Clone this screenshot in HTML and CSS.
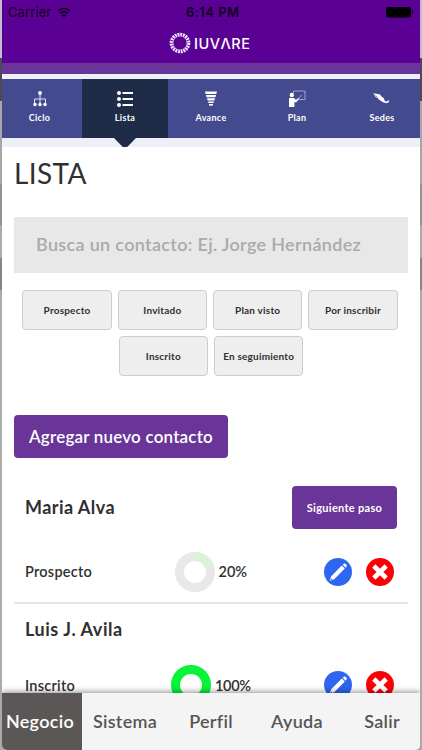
FILE: index.html
```
<!DOCTYPE html>
<html lang="es">
<head>
<meta charset="utf-8">
<title>IUVARE - Lista</title>
<link rel="stylesheet" href="styles.css">
</head>
<body>
<svg class="defs" width="0" height="0">
  <symbol id="edit" viewBox="0 0 28 28">
    <circle cx="14" cy="14" r="14" fill="#2f66f0"/>
    <path d="M5.500 23l1.700-4.800L17.800 7.600l3 3L10.200 21.300zM18.700 6.700l1.200-1c1.400-.8 3.600 1.400 2.700 2.800l-.9 1.200z" fill="#fff"/>
    <path d="M6.900 20.200l1.500 1.500-1.700.6z" fill="#2f66f0"/>
  </symbol>
  <symbol id="remove" viewBox="0 0 28 28">
    <circle cx="14" cy="14" r="14" fill="#fb0007"/>
    <path d="M7.800 8l12.400 12M20.200 8L7.800 20" stroke="#fff" stroke-width="4.600" fill="none"/>
  </symbol>
</svg>
<div class="phone">
  <header class="header">
    <div class="status">
      <span class="carrier">Carrier</span>
      <svg class="wifi" width="14" height="11" viewBox="0 0 14 11"><path d="M1 4c3.500-3.600 8.500-3.600 12 0M3.200 6.400c2.300-2.200 5.300-2.200 7.600 0" fill="none" stroke="#100020" stroke-width="1.700"/><path d="M4.900 8.100c1.300-1 2.900-1 4.200 0L7 10.500z" fill="#100020"/></svg>
      <span class="time">6:14 PM</span>
      <svg class="battery" width="28" height="11" viewBox="0 0 28 11"><rect width="25" height="10.500" rx="2"/><path d="M26 3q2 2.200 0 4.500z"/></svg>
    </div>
    <div class="brand">
      <svg width="22" height="22" viewBox="0 0 22 22" fill="none"><circle cx="11" cy="11" r="8.600" stroke="#f4e9ff" stroke-width="3.500" stroke-dasharray="1.850 .852"/><circle cx="11" cy="11" r="7" stroke="#c7a4e6" stroke-width=".7"/></svg>
      <span class="wordmark">IUVΛRE</span>
    </div>
  </header>
  <div class="stripe"></div>
  <nav class="nav">
    <a class="nav-item first">
      <svg width="18" height="18" viewBox="0 0 18 18"><path d="M9 3v10M3.500 13V9h11v4" fill="none" stroke="#dfe0f5"/><g fill="#fff"><circle cx="9" cy="3" r="1.900"/><circle cx="4" cy="14.500" r="1.700"/><circle cx="9" cy="14.500" r="1.700"/><circle cx="14" cy="14.500" r="1.700"/></g></svg>
      <span>Ciclo</span>
    </a>
    <a class="nav-item active">
      <svg width="18" height="18" viewBox="0 0 18 18"><g fill="#fff"><circle cx="3" cy="3" r="2"/><circle cx="3" cy="9" r="2"/><circle cx="3" cy="15" r="2"/><path d="M6.500 2h10.500v2H6.500zM6.500 8h10.500v2H6.500zM6.500 14h10.500v2H6.500z"/></g></svg>
      <span>Lista</span>
    </a>
    <a class="nav-item">
      <svg width="18" height="18" viewBox="0 0 18 18"><path d="M3 1.500h12l-.7 2.500H3.700zM4 5h10l-.6 2.200H4.600zM5 8.200h8l-.6 2.200H5.600zM6 11.400h6l-.5 1.700h-5zM6.900 14h4.200l-.6 1.800h-3z" fill="#fff"/></svg>
      <span>Avance</span>
    </a>
    <a class="nav-item">
      <svg width="18" height="18" viewBox="0 0 18 18"><path d="M5.500 3V1h11.500v8.500h-6M9.500 10l4-5" fill="none" stroke="#b6b9df" stroke-width=".8"/><circle cx="3.800" cy="5" r="2.200" fill="#fff"/><path d="M1 8h5l2 2 2-2 1 1-2.600 3.300H6.400V17H1z" fill="#fff"/></svg>
      <span>Plan</span>
    </a>
    <a class="nav-item last">
      <svg width="18" height="18" viewBox="0 0 18 18"><path d="M1 3.200l6 1.200 2 2.600 1.800 1 .6 2.300 1.700 1.400 1.700-1 1.700-.5-1.100 2.300-2 .7-2.900-.8L5.700 9.500 4 6.600z" fill="#fff"/><path d="M1 3.500l2.600 4.300" stroke="#fff" stroke-width="1"/></svg>
      <span>Sedes</span>
    </a>
  </nav>
  <div class="nav-shade"></div>
  <main class="content">
    <h1>LISTA</h1>
    <div class="search"><span>Busca un contacto: Ej. Jorge Hernández</span></div>
    <div class="filters">
      <button>Prospecto</button><button>Invitado</button><button>Plan visto</button><button>Por inscribir</button>
    </div>
    <div class="filters second">
      <button>Inscrito</button><button>En seguimiento</button>
    </div>
    <button class="add">Agregar nuevo contacto</button>
    <section class="contact">
      <div class="contact-top"><h2>Maria Alva</h2><button class="next">Siguiente paso</button></div>
      <div class="contact-row">
        <span class="stage">Prospecto</span>
        <svg class="ring" width="40" height="40" viewBox="0 0 40 40" fill="none" stroke-width="9"><circle cx="20" cy="20" r="15.500" stroke="#e8e8e8"/><path d="M20 4.500A15.500 15.500 0 0 1 34.740 15.210" stroke="#d9f3d5"/></svg>
        <span class="percent">20%</span>
        <svg class="icon" width="28" height="28"><use href="#edit"/></svg>
        <svg class="icon" width="28" height="28"><use href="#remove"/></svg>
      </div>
    </section>
    <section class="contact luis">
      <h2>Luis J. Avila</h2>
      <div class="contact-row">
        <span class="stage">Inscrito</span>
        <svg class="ring" width="40" height="40" viewBox="0 0 40 40" fill="none"><circle cx="20" cy="20" r="15.500" stroke="#08f43a" stroke-width="9"/></svg>
        <span class="percent">100%</span>
        <svg class="icon" width="28" height="28"><use href="#edit"/></svg>
        <svg class="icon" width="28" height="28"><use href="#remove"/></svg>
      </div>
    </section>
  </main>
  <footer class="tabs">
    <a class="selected">Negocio</a><a>Sistema</a><a>Perfil</a><a>Ayuda</a><a class="exit">Salir</a>
  </footer>
</div>
</body>
</html>
```
FILE: styles.css
```
* { box-sizing: border-box; }
body {
  margin: 0;
  height: 750px;
  overflow: hidden;
  font-family: Lato, sans-serif;
  color: #303030;
  background: linear-gradient(#c5bdcf 0 58px, #4c4857 58px 101px, #a6a6a6 101px 184px, #8e9694 184px 225px, #aaa 225px 258px, #858585 258px 290px, #aaa 290px);
}
.defs { position: absolute; }
svg { display: block; flex: none; }
button { font: inherit; margin: 0; padding: 0; border: 0; white-space: nowrap; }
.phone {
  display: flex;
  flex-direction: column;
  width: 418px;
  height: 750px;
  margin: 0 auto;
  overflow: hidden;
  background: #fff;
  border-radius: 0 0 5px 5px;
}
.header { flex: none; height: 62.5px; background: #5b0094; }
.status {
  display: grid;
  grid-template-columns: 49px 135px 1fr 30px;
  align-items: center;
  height: 24px;
  padding: 0 4px 0 6px;
  font-family: Inter, sans-serif;
  font-size: 13px;
  color: #100020;
}
.carrier { letter-spacing: .1px; }
.time { font-weight: 600; letter-spacing: .45px; margin-left: -6px; }
.battery { fill: #000; }
.brand { display: flex; align-items: center; gap: 3px; height: 38px; padding-left: 167px; }
.wordmark { color: #fff; font: 500 14.5px Inter, sans-serif; letter-spacing: .5px; }
.stripe { flex: none; height: 11.5px; background: #693599; }
.nav {
  flex: none;
  display: grid;
  grid-template-columns: 80px 86px 86px 86px 80px;
  height: 64px;
  border-top: 5.500px solid #edf0f9;
  background: #434a8d;
}
.nav-item {
  display: flex;
  flex-direction: column;
  align-items: center;
  gap: 4px;
  padding-top: 11px;
  color: #fff;
  font-size: 9px;
  line-height: 11px;
  font-weight: 700;
  letter-spacing: .3px;
}
.first { padding-right: 5px; }
.last { padding-left: 4px; }
.active { position: relative; background: #1e2c48; }
.active::after {
  content: "";
  position: absolute;
  top: 100%;
  left: 32px;
  width: 22px;
  height: 9px;
  background: #1e2c48;
  clip-path: polygon(0 0, 100% 0, 60% 100%, 40% 100%);
}
.nav-shade { flex: none; height: 9px; background: #edf0f9; }
.content { flex: 1; min-height: 0; overflow: hidden; padding: 0 12px; }
h1 { margin: 9px 0 0; font-size: 28px; line-height: 34px; font-weight: 400; letter-spacing: .4px; }
.search {
  display: flex;
  align-items: center;
  height: 56px;
  margin-top: 27px;
  padding: 0 0 2px 22px;
  color: #aaa;
  background: #e8e8e8;
  font-size: 18px;
  font-weight: 600;
  letter-spacing: .33px;
  white-space: nowrap;
}
.filters { display: flex; justify-content: center; gap: 6px; margin-top: 17px; padding-right: 2px; }
.filters.second { margin-top: 6px; padding-right: 0; }
.filters button {
  width: 89.300px;
  height: 40px;
  border: 1px solid #ccc;
  border-radius: 4px;
  background: #eee;
  color: #303030;
  font-size: 10px;
  font-weight: 700;
  letter-spacing: .2px;
  padding-bottom: 1px;
}
.add {
  display: block;
  width: 214px;
  height: 43px;
  margin-top: 39px;
  border-radius: 4px;
  background: #693599;
  color: #fff;
  font-size: 17px;
  font-weight: 600;
  letter-spacing: .2px;
}
.contact { height: 146px; padding: 28px 11px 0; border-bottom: 2px solid #e4e4e4; }
.contact-top { display: flex; justify-content: space-between; align-items: center; }
h2 { margin: 0; padding-bottom: 2px; font-size: 18px; line-height: 24px; font-weight: 700; letter-spacing: .45px; }
.next { width: 105px; height: 43px; padding-bottom: 1px; border-radius: 4px; background: #693599; color: #fff; font-size: 11px; font-weight: 700; letter-spacing: .3px; }
.contact-row {
  display: grid;
  grid-template-columns: 149.500px 44px 105.500px 41.500px 28px;
  align-items: center;
  margin-top: 23px;
}
.stage, .percent { padding-bottom: 2px; font-size: 14.500px; font-weight: 600; }
.stage { letter-spacing: .25px; }
.luis { padding-top: 13px; border: 0; }
.luis h2 { padding: 0; letter-spacing: .55px; }
.luis .contact-row { grid-template-columns: 146px 44px 109px 41.500px 28px; margin-top: 24px; }
.luis .percent { letter-spacing: -.3px; }
.luis .stage, .luis .percent { padding-bottom: 0; }
.tabs {
  position: relative;
  flex: none;
  display: grid;
  grid-template-columns: 80px 86px 86px 86px 80px;
  height: 57px;
  background: #f4f4f4;
  box-shadow: 0 -1px 6px rgba(0, 0, 0, .45);
}
.tabs a {
  display: flex;
  align-items: center;
  justify-content: center;
  padding-bottom: 2px;
  color: #555;
  font-size: 18px;
  font-weight: 600;
  letter-spacing: .3px;
}
.tabs .selected { padding-right: 4px; color: #fff; background: #5b5757; }
.tabs .exit { padding-left: 4px; }
```
